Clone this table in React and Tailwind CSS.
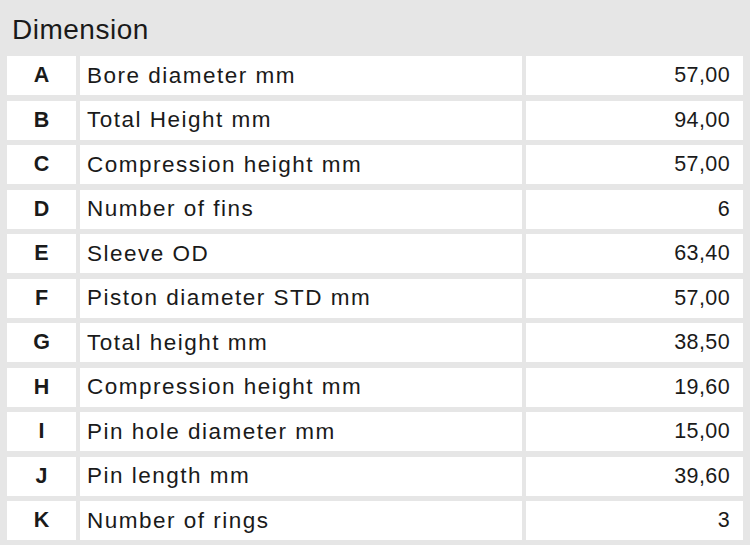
const rows = [
  { key: "A", label: "Bore diameter mm", value: "57,00" },
  { key: "B", label: "Total Height mm", value: "94,00" },
  { key: "C", label: "Compression height mm", value: "57,00" },
  { key: "D", label: "Number of fins", value: "6" },
  { key: "E", label: "Sleeve OD", value: "63,40" },
  { key: "F", label: "Piston diameter STD mm", value: "57,00" },
  { key: "G", label: "Total height mm", value: "38,50" },
  { key: "H", label: "Compression height mm", value: "19,60" },
  { key: "I", label: "Pin hole diameter mm", value: "15,00" },
  { key: "J", label: "Pin length mm", value: "39,60" },
  { key: "K", label: "Number of rings", value: "3" },
];

const App = () => {
  return (
    <div className="h-[545px] w-[750px] bg-[#e6e6e6] px-[7px] pb-[5px] font-['Liberation_Sans',Arial,sans-serif] text-[#1a1a1a]">
      <div className="flex h-[56px] items-center pl-[5px] pt-[4px] text-[28px] tracking-[0.5px]">Dimension</div>
      <div className="grid grid-cols-[69px_442px_217px] gap-x-[4px] gap-y-[5.5px]">
        {rows.map((row) => (
          <div key={row.key} className="contents">
            <div className="flex h-[39px] items-center justify-center bg-white text-[21.5px] font-bold">{row.key}</div>
            <div className="flex h-[39px] items-center bg-white pl-[7px] text-[22.5px] tracking-[1.5px]">{row.label}</div>
            <div className="flex h-[39px] items-center justify-end bg-white pr-[13px] text-[21.5px] tracking-[0.4px]">{row.value}</div>
          </div>
        ))}
      </div>
    </div>
  );
};

export default App;
